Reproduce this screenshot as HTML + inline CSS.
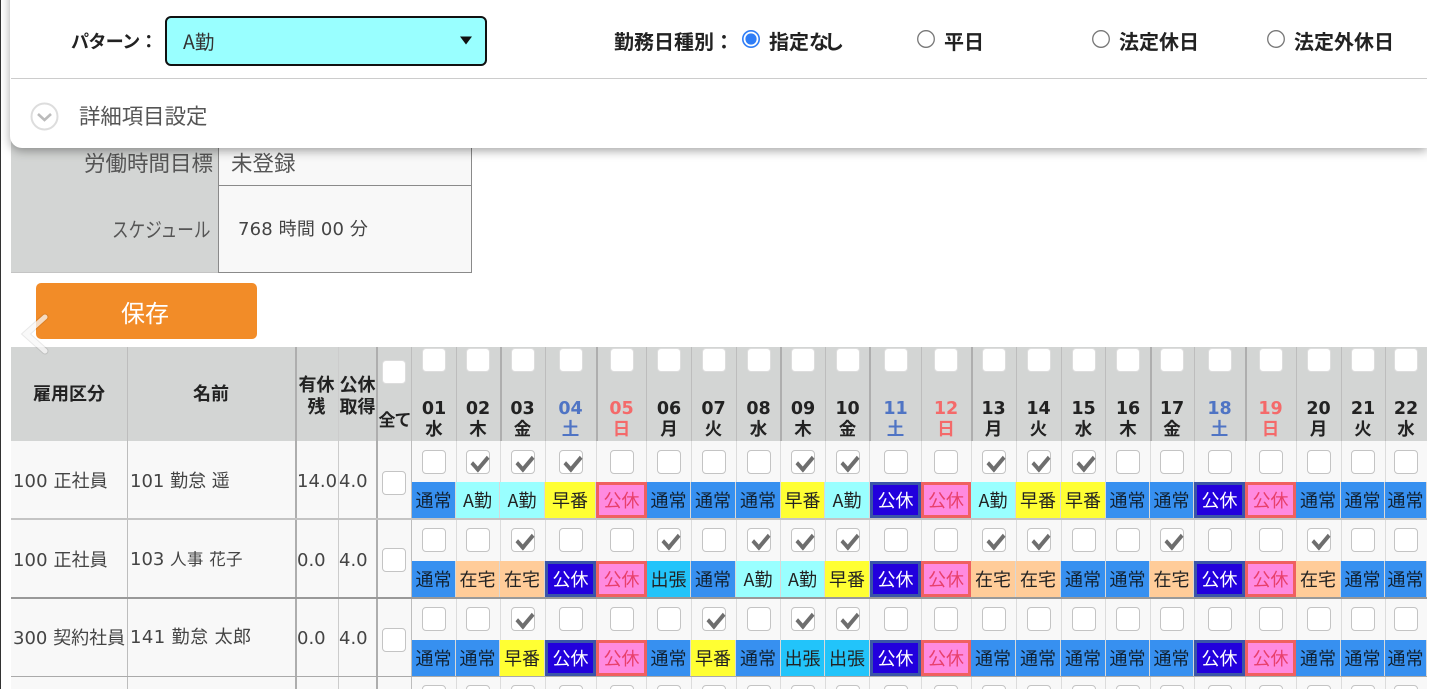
<!DOCTYPE html>
<html lang="ja"><head><meta charset="utf-8"><title>スケジュール</title>
<style>
html,body{margin:0;padding:0;width:1431px;height:689px;overflow:hidden;background:#fff}
body{position:relative;font-family:"DejaVu Sans","Noto Sans CJK JP",sans-serif;color:#444}
div,span,svg{position:absolute;box-sizing:border-box}
.t{white-space:nowrap;line-height:24px;font-size:18px}
.n{font-family:"Noto Sans CJK JP",sans-serif}
.b{font-weight:bold;color:#222}
.c1{left:412px;width:44px}.c2{left:456px;width:44px}.c3{left:500px;width:45px}.c4{left:545px;width:51px}.c5{left:596px;width:51px}.c6{left:647px;width:44px}.c7{left:691px;width:45px}.c8{left:736px;width:45px}.c9{left:781px;width:44px}.c10{left:825px;width:45px}.c11{left:870px;width:51px}.c12{left:921px;width:50px}.c13{left:971px;width:45px}.c14{left:1016px;width:45px}.c15{left:1061px;width:45px}.c16{left:1106px;width:44px}.c17{left:1150px;width:44px}.c18{left:1194px;width:51px}.c19{left:1245px;width:51px}.c20{left:1296px;width:45px}.c21{left:1341px;width:44px}.c22{left:1385px;width:42px}
.row{left:0;width:1431px;height:0}
.s{top:0;height:36px;font:18px/36px "Noto Sans CJK JP",sans-serif;text-align:center;color:#222;white-space:nowrap;overflow:hidden;border-right:1px solid #d8d8d8}
.bl{background:#3790f0;color:#123}
.cy{background:#99ffff}
.ye{background:#ffff33}
.pu{background:#2200dd;color:#fff;border:3px solid #3a55a8;line-height:30px}
.pk{background:#ff8ae0;color:#e8406c;border:3px solid #f06060;line-height:30px}
.or{background:#ffcc99}
.sk{background:#22c4fa}
.cw{top:0;height:24px}
.cb{left:50%;margin-left:-12px;top:0;width:24px;height:24px;background:#fff;border:1px solid #c4c4c4;border-radius:4px}
.cb.k::after{content:"";position:absolute;left:4px;top:5px;width:14px;height:7px;border-left:4.5px solid #6e6e6e;border-bottom:4.5px solid #6e6e6e;transform:rotate(-50deg) skewX(-8deg)}
.hb{top:348px;height:24px}
.hb .cb{border-color:#ddd}
.d{top:399px;height:44px;text-align:center;font-weight:bold;color:#222;font-size:17.5px;line-height:21px;white-space:nowrap}
.d span{position:static;display:block}
.d.sa{color:#4f74c4}.d.su{color:#f46a6a}
.v{top:347px;width:1px;background:#bdbdbd}
.v2{top:347px;width:2px;background:#aeaeae}
.vb{width:1px;background:#dcdcdc}
.lb{font-family:"Noto Sans CJK JP",sans-serif;font-weight:bold;font-size:18px;line-height:22px;color:#222;text-align:center;white-space:nowrap}
.top{top:29px;font-size:20px}
.t span{position:static}
</style></head><body>
<div style="left:0;top:0;width:1px;height:689px;background:#333"></div>

<!-- upper info table -->
<div style="left:11px;top:130px;width:207px;height:142px;background:#d3d5d4"></div>
<div style="left:218px;top:130px;width:254px;height:143px;background:#f8f8f8;border:1px solid #8a8a8a;border-top:0"></div>
<div style="left:218px;top:185px;width:254px;height:1px;background:#8a8a8a"></div>
<div style="left:11px;top:272px;width:207px;height:1px;background:#c4c4c4"></div>
<div class="t n" style="left:84px;top:151px;font-size:21.5px;color:#555">労働時間目標</div>
<div class="t n" style="left:231px;top:151px;font-size:21.5px;color:#555">未登録</div>
<div class="t n" style="left:112px;top:216px;font-size:20.5px;color:#555;transform:scaleX(.81);transform-origin:0 50%">スケジュール</div>
<div class="t" style="left:238px;top:218px;font-size:18px;letter-spacing:.15px;color:#444">768 時間 00 分</div>

<!-- save -->
<div class="n" style="left:36px;top:283px;width:221px;height:56px;background:#f28c28;border-radius:5px;color:#fff;font-size:24px;line-height:58px;text-align:center;padding-right:3px">保存</div>

<!-- table header -->
<div style="left:11px;top:347px;width:1416px;height:94px;background:#d3d5d4"></div>
<div style="left:11px;top:441px;width:1416px;height:248px;background:#f8f8f8"></div>
<div class="v" style="left:127px;height:342px"></div>
<div class="v2" style="left:295px;height:342px"></div>
<div class="v" style="left:338px;height:342px;background:#ccc"></div>
<div class="v2" style="left:376px;height:342px"></div>
<div class="v" style="left:411px;height:342px"></div>
<div class="v" style="left:456px;height:94px"></div><div class="v2" style="left:500px;height:94px"></div><div class="v" style="left:545px;height:94px"></div><div class="v2" style="left:596px;height:94px"></div><div class="v" style="left:646px;height:94px"></div><div class="v" style="left:691px;height:94px"></div><div class="v" style="left:736px;height:94px"></div><div class="v2" style="left:780px;height:94px"></div><div class="v" style="left:825px;height:94px"></div><div class="v2" style="left:869px;height:94px"></div><div class="v" style="left:921px;height:94px"></div><div class="v2" style="left:971px;height:94px"></div><div class="v" style="left:1016px;height:94px"></div><div class="v" style="left:1061px;height:94px"></div><div class="v" style="left:1105px;height:94px"></div><div class="v2" style="left:1150px;height:94px"></div><div class="v" style="left:1194px;height:94px"></div><div class="v2" style="left:1245px;height:94px"></div><div class="v" style="left:1296px;height:94px"></div><div class="v" style="left:1341px;height:94px"></div><div class="v" style="left:1385px;height:94px"></div>

<div class="vb" style="left:456px;top:441px;height:248px"></div><div class="vb" style="left:500px;top:441px;height:248px"></div><div class="vb" style="left:545px;top:441px;height:248px"></div><div class="vb" style="left:596px;top:441px;height:248px"></div><div class="vb" style="left:646px;top:441px;height:248px"></div><div class="vb" style="left:691px;top:441px;height:248px"></div><div class="vb" style="left:736px;top:441px;height:248px"></div><div class="vb" style="left:780px;top:441px;height:248px"></div><div class="vb" style="left:825px;top:441px;height:248px"></div><div class="vb" style="left:869px;top:441px;height:248px"></div><div class="vb" style="left:921px;top:441px;height:248px"></div><div class="vb" style="left:971px;top:441px;height:248px"></div><div class="vb" style="left:1016px;top:441px;height:248px"></div><div class="vb" style="left:1061px;top:441px;height:248px"></div><div class="vb" style="left:1105px;top:441px;height:248px"></div><div class="vb" style="left:1150px;top:441px;height:248px"></div><div class="vb" style="left:1194px;top:441px;height:248px"></div><div class="vb" style="left:1245px;top:441px;height:248px"></div><div class="vb" style="left:1296px;top:441px;height:248px"></div><div class="vb" style="left:1341px;top:441px;height:248px"></div><div class="vb" style="left:1385px;top:441px;height:248px"></div>

<div class="lb" style="left:11px;top:382px;width:116px">雇用区分</div>
<div class="lb" style="left:127px;top:382px;width:168px">名前</div>
<div class="lb" style="left:295px;top:373px;width:43px">有休<br>残</div>
<div class="lb" style="left:338px;top:373px;width:39px">公休<br>取得</div>
<div class="lb" style="left:377px;top:408px;width:35px;font-size:17px;letter-spacing:-1px">全て</div>
<div class="cb" style="left:394px;top:360px;border-color:#ddd"></div>

<div class="hb c1"><div class="cb"></div></div><div class="hb c2"><div class="cb"></div></div><div class="hb c3"><div class="cb"></div></div><div class="hb c4"><div class="cb"></div></div><div class="hb c5"><div class="cb"></div></div><div class="hb c6"><div class="cb"></div></div><div class="hb c7"><div class="cb"></div></div><div class="hb c8"><div class="cb"></div></div><div class="hb c9"><div class="cb"></div></div><div class="hb c10"><div class="cb"></div></div><div class="hb c11"><div class="cb"></div></div><div class="hb c12"><div class="cb"></div></div><div class="hb c13"><div class="cb"></div></div><div class="hb c14"><div class="cb"></div></div><div class="hb c15"><div class="cb"></div></div><div class="hb c16"><div class="cb"></div></div><div class="hb c17"><div class="cb"></div></div><div class="hb c18"><div class="cb"></div></div><div class="hb c19"><div class="cb"></div></div><div class="hb c20"><div class="cb"></div></div><div class="hb c21"><div class="cb"></div></div><div class="hb c22"><div class="cb"></div></div>

<div class="d c1">01<span>水</span></div><div class="d c2">02<span>木</span></div><div class="d c3">03<span>金</span></div><div class="d c4 sa">04<span>土</span></div><div class="d c5 su">05<span>日</span></div><div class="d c6">06<span>月</span></div><div class="d c7">07<span>火</span></div><div class="d c8">08<span>水</span></div><div class="d c9">09<span>木</span></div><div class="d c10">10<span>金</span></div><div class="d c11 sa">11<span>土</span></div><div class="d c12 su">12<span>日</span></div><div class="d c13">13<span>月</span></div><div class="d c14">14<span>火</span></div><div class="d c15">15<span>水</span></div><div class="d c16">16<span>木</span></div><div class="d c17">17<span>金</span></div><div class="d c18 sa">18<span>土</span></div><div class="d c19 su">19<span>日</span></div><div class="d c20">20<span>月</span></div><div class="d c21">21<span>火</span></div><div class="d c22">22<span>水</span></div>

<!-- row separators -->
<div style="left:11px;top:518px;width:1416px;height:2px;background:#c4c4c4"></div>
<div style="left:11px;top:597px;width:1416px;height:2px;background:#999"></div>
<div style="left:11px;top:676px;width:1416px;height:1px;background:#aaa"></div>

<!-- row labels -->
<div class="t" style="left:13px;top:470px;letter-spacing:.1px">100 正社員</div>
<div class="t" style="left:130px;top:470px;">101 勤怠 遥</div>
<div class="t" style="left:297px;top:470px;">14.0</div>
<div class="t" style="left:339px;top:470px;">4.0</div>
<div class="cb" style="left:394px;top:471px"></div>

<div class="t" style="left:13px;top:549px;letter-spacing:.1px">100 正社員</div>
<div class="t" style="left:130px;top:548px;">103 <span style="font-size:16.5px;letter-spacing:.3px">人事 花子</span></div>
<div class="t" style="left:297px;top:549px;">0.0</div>
<div class="t" style="left:339px;top:549px;">4.0</div>
<div class="cb" style="left:394px;top:548px"></div>

<div class="t" style="left:13px;top:627px;">300 契約社員</div>
<div class="t" style="left:130px;top:626px;letter-spacing:.4px">141 勤怠 太郎</div>
<div class="t" style="left:297px;top:627px;">0.0</div>
<div class="t" style="left:339px;top:627px;">4.0</div>
<div class="cb" style="left:394px;top:628px"></div>

<!-- row 1 -->
<div class="row" style="top:450px">
<div class="cw c1"><div class="cb"></div></div><div class="cw c2"><div class="cb k"></div></div><div class="cw c3"><div class="cb k"></div></div><div class="cw c4"><div class="cb k"></div></div><div class="cw c5"><div class="cb"></div></div><div class="cw c6"><div class="cb"></div></div><div class="cw c7"><div class="cb"></div></div><div class="cw c8"><div class="cb"></div></div><div class="cw c9"><div class="cb k"></div></div><div class="cw c10"><div class="cb k"></div></div><div class="cw c11"><div class="cb"></div></div><div class="cw c12"><div class="cb"></div></div><div class="cw c13"><div class="cb k"></div></div><div class="cw c14"><div class="cb k"></div></div><div class="cw c15"><div class="cb k"></div></div><div class="cw c16"><div class="cb"></div></div><div class="cw c17"><div class="cb"></div></div><div class="cw c18"><div class="cb"></div></div><div class="cw c19"><div class="cb"></div></div><div class="cw c20"><div class="cb"></div></div><div class="cw c21"><div class="cb"></div></div><div class="cw c22"><div class="cb"></div></div>
</div>
<div class="row" style="top:482px">
<div class="s c1 bl">通常</div><div class="s c2 cy">A勤</div><div class="s c3 cy">A勤</div><div class="s c4 ye">早番</div><div class="s c5 pk">公休</div><div class="s c6 bl">通常</div><div class="s c7 bl">通常</div><div class="s c8 bl">通常</div><div class="s c9 ye">早番</div><div class="s c10 cy">A勤</div><div class="s c11 pu">公休</div><div class="s c12 pk">公休</div><div class="s c13 cy">A勤</div><div class="s c14 ye">早番</div><div class="s c15 ye">早番</div><div class="s c16 bl">通常</div><div class="s c17 bl">通常</div><div class="s c18 pu">公休</div><div class="s c19 pk">公休</div><div class="s c20 bl">通常</div><div class="s c21 bl">通常</div><div class="s c22 bl">通常</div>
</div>

<!-- row 2 -->
<div class="row" style="top:528px">
<div class="cw c1"><div class="cb"></div></div><div class="cw c2"><div class="cb"></div></div><div class="cw c3"><div class="cb k"></div></div><div class="cw c4"><div class="cb"></div></div><div class="cw c5"><div class="cb"></div></div><div class="cw c6"><div class="cb k"></div></div><div class="cw c7"><div class="cb"></div></div><div class="cw c8"><div class="cb k"></div></div><div class="cw c9"><div class="cb k"></div></div><div class="cw c10"><div class="cb k"></div></div><div class="cw c11"><div class="cb"></div></div><div class="cw c12"><div class="cb"></div></div><div class="cw c13"><div class="cb k"></div></div><div class="cw c14"><div class="cb k"></div></div><div class="cw c15"><div class="cb"></div></div><div class="cw c16"><div class="cb"></div></div><div class="cw c17"><div class="cb k"></div></div><div class="cw c18"><div class="cb"></div></div><div class="cw c19"><div class="cb"></div></div><div class="cw c20"><div class="cb k"></div></div><div class="cw c21"><div class="cb"></div></div><div class="cw c22"><div class="cb"></div></div>
</div>
<div class="row" style="top:561px">
<div class="s c1 bl">通常</div><div class="s c2 or">在宅</div><div class="s c3 or">在宅</div><div class="s c4 pu">公休</div><div class="s c5 pk">公休</div><div class="s c6 sk">出張</div><div class="s c7 bl">通常</div><div class="s c8 cy">A勤</div><div class="s c9 cy">A勤</div><div class="s c10 ye">早番</div><div class="s c11 pu">公休</div><div class="s c12 pk">公休</div><div class="s c13 or">在宅</div><div class="s c14 or">在宅</div><div class="s c15 bl">通常</div><div class="s c16 bl">通常</div><div class="s c17 or">在宅</div><div class="s c18 pu">公休</div><div class="s c19 pk">公休</div><div class="s c20 or">在宅</div><div class="s c21 bl">通常</div><div class="s c22 bl">通常</div>
</div>

<!-- row 3 -->
<div class="row" style="top:607px">
<div class="cw c1"><div class="cb"></div></div><div class="cw c2"><div class="cb"></div></div><div class="cw c3"><div class="cb k"></div></div><div class="cw c4"><div class="cb"></div></div><div class="cw c5"><div class="cb"></div></div><div class="cw c6"><div class="cb"></div></div><div class="cw c7"><div class="cb k"></div></div><div class="cw c8"><div class="cb"></div></div><div class="cw c9"><div class="cb k"></div></div><div class="cw c10"><div class="cb k"></div></div><div class="cw c11"><div class="cb"></div></div><div class="cw c12"><div class="cb"></div></div><div class="cw c13"><div class="cb"></div></div><div class="cw c14"><div class="cb"></div></div><div class="cw c15"><div class="cb"></div></div><div class="cw c16"><div class="cb"></div></div><div class="cw c17"><div class="cb"></div></div><div class="cw c18"><div class="cb"></div></div><div class="cw c19"><div class="cb"></div></div><div class="cw c20"><div class="cb"></div></div><div class="cw c21"><div class="cb"></div></div><div class="cw c22"><div class="cb"></div></div>
</div>
<div class="row" style="top:640px">
<div class="s c1 bl">通常</div><div class="s c2 bl">通常</div><div class="s c3 ye">早番</div><div class="s c4 pu">公休</div><div class="s c5 pk">公休</div><div class="s c6 bl">通常</div><div class="s c7 ye">早番</div><div class="s c8 bl">通常</div><div class="s c9 sk">出張</div><div class="s c10 sk">出張</div><div class="s c11 pu">公休</div><div class="s c12 pk">公休</div><div class="s c13 bl">通常</div><div class="s c14 bl">通常</div><div class="s c15 bl">通常</div><div class="s c16 bl">通常</div><div class="s c17 bl">通常</div><div class="s c18 pu">公休</div><div class="s c19 pk">公休</div><div class="s c20 bl">通常</div><div class="s c21 bl">通常</div><div class="s c22 bl">通常</div>
</div>

<!-- row 4 (clipped) -->
<div class="row" style="top:685px">
<div class="cw c1"><div class="cb"></div></div><div class="cw c2"><div class="cb"></div></div><div class="cw c3"><div class="cb"></div></div><div class="cw c4"><div class="cb"></div></div><div class="cw c5"><div class="cb"></div></div><div class="cw c6"><div class="cb"></div></div><div class="cw c7"><div class="cb"></div></div><div class="cw c8"><div class="cb"></div></div><div class="cw c9"><div class="cb"></div></div><div class="cw c10"><div class="cb"></div></div><div class="cw c11"><div class="cb"></div></div><div class="cw c12"><div class="cb"></div></div><div class="cw c13"><div class="cb"></div></div><div class="cw c14"><div class="cb"></div></div><div class="cw c15"><div class="cb"></div></div><div class="cw c16"><div class="cb"></div></div><div class="cw c17"><div class="cb"></div></div><div class="cw c18"><div class="cb"></div></div><div class="cw c19"><div class="cb"></div></div><div class="cw c20"><div class="cb"></div></div><div class="cw c21"><div class="cb"></div></div><div class="cw c22"><div class="cb"></div></div>
</div>

<!-- carousel chevron overlay -->
<svg style="left:20px;top:312px" width="32" height="44" viewBox="0 0 32 44"><path d="M25 5 L6 22 L25 39" fill="none" stroke="#000" stroke-opacity=".09" stroke-width="7" stroke-linecap="round"/><path d="M25 5 L6 22 L25 39" fill="none" stroke="#fff" stroke-opacity=".72" stroke-width="5" stroke-linecap="round"/></svg>

<!-- top panel -->
<div style="left:10px;top:-20px;width:1417px;height:168px;background:#fff;border-radius:0 0 0 12px;box-shadow:0 3px 10px rgba(0,0,0,.35);clip-path:inset(0 0 -20px -20px)"></div>
<div style="left:11px;top:78px;width:1416px;height:1px;background:#ccc"></div>
<div class="t n b" style="left:71px;top:29px;font-size:18px;letter-spacing:-.6px">パターン：</div>
<div style="left:165px;top:16px;width:322px;height:50px;background:#99ffff;border:2.5px solid #111;border-radius:6px"></div>
<div class="t n" style="left:183px;top:29px;font-size:19.5px;color:#333">A勤</div>
<svg style="left:459px;top:36px" width="14" height="9" viewBox="0 0 14 9"><path d="M1 0.5 H13 L7 8.5 Z" fill="#111"/></svg>

<div class="t n b top" style="left:614px;">勤務日種別：</div>
<svg style="left:741px;top:29px" width="20" height="20" viewBox="0 0 20 20"><circle cx="10" cy="10" r="8.2" fill="#fff" stroke="#2f7df6" stroke-width="1.6"/><circle cx="10" cy="10" r="5.6" fill="#2f7df6"/></svg>
<div class="t n b top" style="left:769px;">指定<span style="letter-spacing:-5px">なし</span></div>
<svg style="left:916px;top:29px" width="20" height="20" viewBox="0 0 20 20"><circle cx="10" cy="10" r="8.3" fill="#fff" stroke="#777" stroke-width="1.3"/></svg>
<div class="t n b top" style="left:944px;">平日</div>
<svg style="left:1091px;top:29px" width="20" height="20" viewBox="0 0 20 20"><circle cx="10" cy="10" r="8.3" fill="#fff" stroke="#777" stroke-width="1.3"/></svg>
<div class="t n b top" style="left:1119px;">法定休日</div>
<svg style="left:1266px;top:29px" width="20" height="20" viewBox="0 0 20 20"><circle cx="10" cy="10" r="8.3" fill="#fff" stroke="#777" stroke-width="1.3"/></svg>
<div class="t n b top" style="left:1294px;">法定外休日</div>

<svg style="left:30px;top:102px" width="29" height="29" viewBox="0 0 29 29"><circle cx="14.5" cy="14.5" r="13" fill="#fff" stroke="#ddd" stroke-width="2"/><path d="M8 12 L14.5 18 L21 12" fill="none" stroke="#bbb" stroke-width="2.6"/></svg>
<div class="t n" style="left:79px;top:104px;font-size:21.4px;color:#555">詳細項目設定</div>
</body></html>
